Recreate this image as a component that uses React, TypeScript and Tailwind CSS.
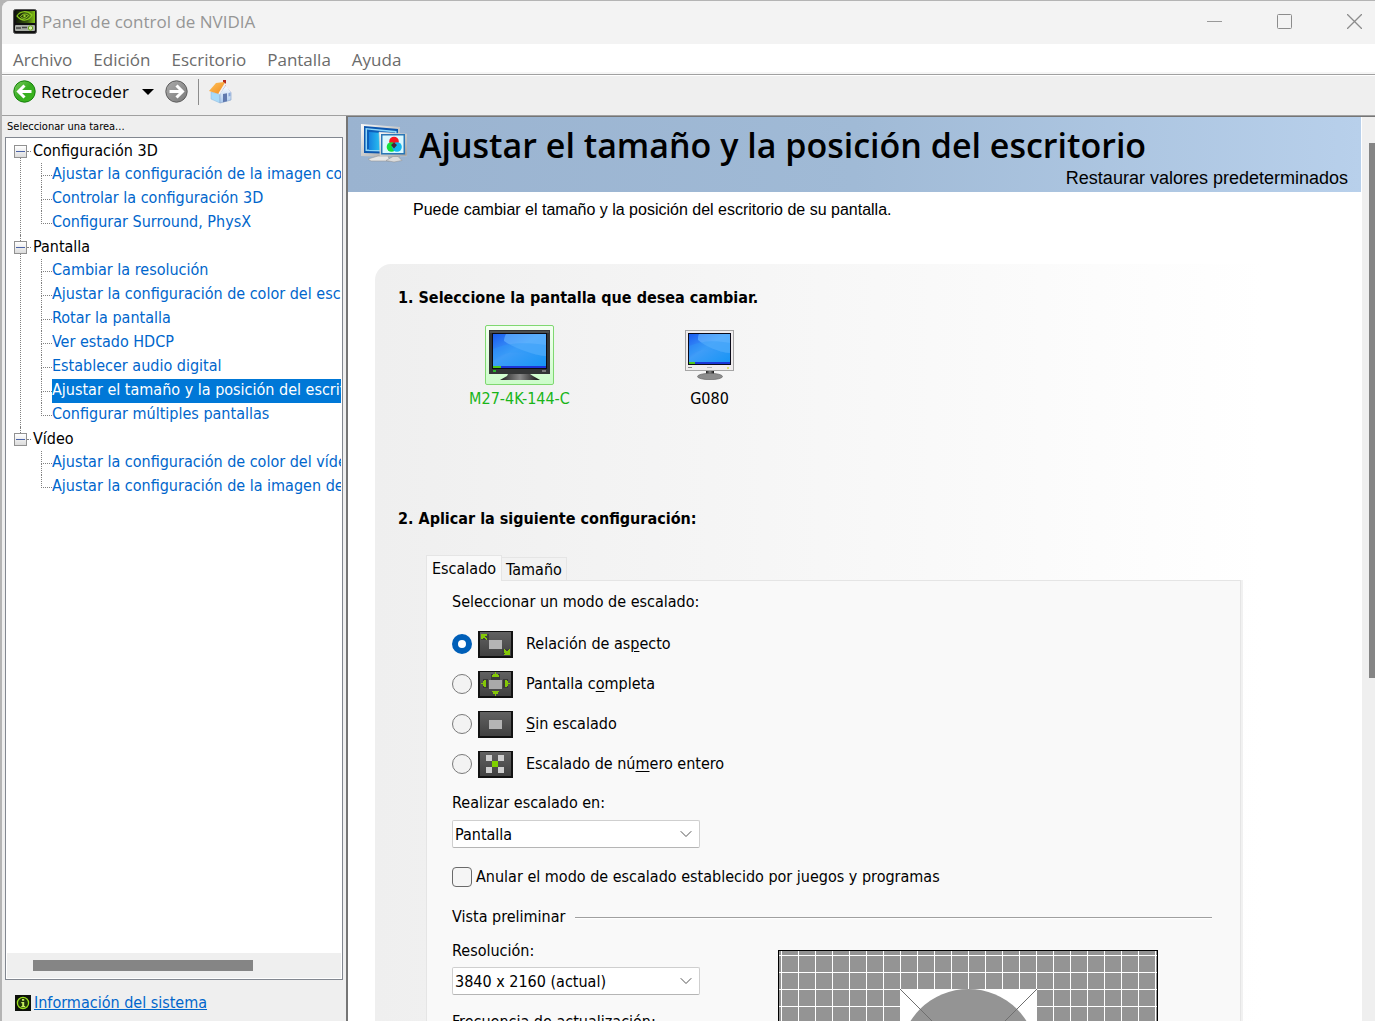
import { useState } from 'react';
import type { ReactNode } from 'react';
import { ChevronDown } from 'lucide-react';

interface TaskGroup {
  title: string;
  tasks: string[];
}

const MENUS = ['Archivo', 'Edición', 'Escritorio', 'Pantalla', 'Ayuda'];

const GROUPS: TaskGroup[] = [
  {
    title: 'Configuración 3D',
    tasks: [
      'Ajustar la configuración de la imagen con vista previa',
      'Controlar la configuración 3D',
      'Configurar Surround, PhysX',
    ],
  },
  {
    title: 'Pantalla',
    tasks: [
      'Cambiar la resolución',
      'Ajustar la configuración de color del escritorio',
      'Rotar la pantalla',
      'Ver estado HDCP',
      'Establecer audio digital',
      'Ajustar el tamaño y la posición del escritorio',
      'Configurar múltiples pantallas',
    ],
  },
  {
    title: 'Vídeo',
    tasks: [
      'Ajustar la configuración de color del vídeo',
      'Ajustar la configuración de la imagen de vídeo',
    ],
  },
];

/* ---------- icons ---------- */

function AppIcon() {
  return (
    <svg width="24" height="25" viewBox="0 0 24 25" className="shrink-0">
      <defs>
        <linearGradient id="appGreen" x1="0" y1="0" x2="1" y2="0">
          <stop offset="0" stopColor="#12190a" />
          <stop offset="0.6" stopColor="#3c5c10" />
          <stop offset="1" stopColor="#84c414" />
        </linearGradient>
      </defs>
      <rect x="0.5" y="0.5" width="23" height="24" rx="2" fill="#111" stroke="#555" />
      <rect x="3" y="2" width="19" height="12" fill="url(#appGreen)" />
      <path d="M4 7c3-5 10-6 15-1-3 6-10 7-15 1z" fill="none" stroke="#8ccc1e" strokeWidth="1.2" />
      <path d="M7.500 7.500c2-3 6-3 8-1-2 3-5 4-8 1z" fill="none" stroke="#9bd62a" strokeWidth="1" />
      <circle cx="11.500" cy="7" r="1.200" fill="#9bd62a" />
      <rect x="2" y="16" width="20" height="6" rx="1" fill="#a9ada6" />
      <path d="M3 19h5M9 18.500h5" stroke="#444" strokeWidth="1.500" />
      <circle cx="17.500" cy="19" r="2.200" fill="#d8f2b0" stroke="#6aa516" />
    </svg>
  );
}

function ArrowIcon({ forward = false }: { forward?: boolean }) {
  return (
    <svg width="23" height="23" viewBox="0 0 23 23" className="shrink-0">
      <defs>
        <linearGradient id="backFill" x1="0" y1="0" x2="1" y2="1">
          <stop offset="0" stopColor="#7ccc60" />
          <stop offset="0.5" stopColor="#36ac20" />
          <stop offset="1" stopColor="#3cb81c" />
        </linearGradient>
        <linearGradient id="fwdFill" x1="0" y1="0" x2="1" y2="1">
          <stop offset="0" stopColor="#ababab" />
          <stop offset="1" stopColor="#7a7a7a" />
        </linearGradient>
      </defs>
      <circle
        cx="11.5"
        cy="11.5"
        r="10.7"
        fill={forward ? 'url(#fwdFill)' : 'url(#backFill)'}
        stroke={forward ? '#5e5e5e' : '#16800c'}
      />
      <path
        d={forward ? 'M4.500 11.500H17M11.500 5.500l6 6-6 6' : 'M18.500 11.500H6M11.500 5.500l-6 6 6 6'}
        fill="none"
        stroke="#fff"
        strokeWidth="3"
      />
    </svg>
  );
}

function HomeIcon() {
  return (
    <svg width="24" height="24" viewBox="0 0 24 24">
      <defs>
        <linearGradient id="roof" x1="0" y1="0" x2="1" y2="1">
          <stop offset="0" stopColor="#ffc35c" />
          <stop offset="1" stopColor="#f08a1c" />
        </linearGradient>
        <linearGradient id="wall" x1="0" y1="0" x2="0" y2="1">
          <stop offset="0" stopColor="#ffffff" />
          <stop offset="1" stopColor="#a9c9ee" />
        </linearGradient>
      </defs>
      <path d="M2 12l9 2v9l-9-4z" fill="#a9dbf8" stroke="#8bb4df" strokeWidth="0.5" />
      <path d="M11 13l6-8 5 7v8l-11 3z" fill="url(#wall)" stroke="#8fa9cf" strokeWidth="0.7" />
      <rect x="14" y="0" width="3" height="6" fill="#b4281c" />
      <path d="M0 11l7-8 8-1 1 2-6 10z" fill="url(#roof)" />
      <path d="M10 14l6-10 7 8" fill="none" stroke="#f3eef0" strokeWidth="1.600" />
      <path d="M14 14l4-.7v8l-4 1z" fill="#5f78ad" />
      <path d="M19.500 13l2-.4v3.500l-2 .4z" fill="#8aa6d8" />
    </svg>
  );
}

function InfoIcon() {
  return (
    <svg width="16" height="16" viewBox="0 0 16 16" className="shrink-0">
      <rect width="16" height="16" fill="#0c100a" />
      <circle cx="8" cy="8" r="5.600" fill="#1f330a" stroke="#9adf1c" strokeWidth="1.300" />
      <path d="M7 4h2.200v1.800H7zM6.300 7h2.900v4h1v1.300H6.300V11h.9V8.200h-.9z" fill="#c8f060" />
    </svg>
  );
}

function HeaderIcon() {
  return (
    <svg width="46" height="40" viewBox="0 0 46 40" className="shrink-0">
      <defs>
        <linearGradient id="screenBlue" x1="0" y1="0" x2="1" y2="0">
          <stop offset="0" stopColor="#1683e0" />
          <stop offset="0.6" stopColor="#2fd4f6" />
          <stop offset="1" stopColor="#7feefb" />
        </linearGradient>
        <linearGradient id="silver" x1="0" y1="0" x2="1" y2="1">
          <stop offset="0" stopColor="#fafafa" />
          <stop offset="1" stopColor="#9b9b9b" />
        </linearGradient>
      </defs>
      <path d="M0 0l39 3v30l-16 0-23-1z" fill="url(#silver)" />
      <path d="M3 2l34 3v25l-34-1z" fill="#0c56ae" />
      <path d="M4.500 4l31 3v21l-31-1z" fill="#8fd6f8" />
      <path d="M6 5.500l28 3v18l-28-1z" fill="#0d5fb8" />
      <path d="M8 8l25 2v16H8z" fill="url(#screenBlue)" />
      <path d="M7 35l10-3h10l2 5H10z" fill="#e6e6e6" stroke="#999" strokeWidth="0.600" />
      <path d="M18 8l28 2v22H19z" fill="url(#silver)" stroke="#ccc" strokeWidth="0.500" />
      <path d="M20 10h24v20.500H20z" fill="#2a76b6" />
      <path d="M21.500 11.500h21V29h-21z" fill="#d9f8ff" />
      <circle cx="33" cy="17.500" r="4.800" fill="#fa1420" />
      <circle cx="30.500" cy="23" r="4.800" fill="#12e03a" />
      <circle cx="36" cy="23" r="4.800" fill="#12b6ee" />
      <path d="M33 18.500l3 2.500-3 3.500-3-3.500z" fill="#4a2338" />
      <path d="M25 36.500l7-4h5l4 4-8 1.500z" fill="#dcdcdc" stroke="#8e8e8e" strokeWidth="0.500" />
    </svg>
  );
}

function ScreenDefs() {
  return (
    <defs>
      <linearGradient id="lcd" x1="0" y1="0" x2="1" y2="1">
        <stop offset="0" stopColor="#1a5cf0" />
        <stop offset="0.450" stopColor="#3f9df8" />
        <stop offset="1" stopColor="#1795f5" />
      </linearGradient>
      <linearGradient id="standDark" x1="0" y1="0" x2="1" y2="0">
        <stop offset="0" stopColor="#222" />
        <stop offset="0.500" stopColor="#888" />
        <stop offset="1" stopColor="#111" />
      </linearGradient>
    </defs>
  );
}

function BlackMonitor() {
  return (
    <svg width="61" height="50" viewBox="0 0 61 50">
      <ScreenDefs />
      <rect width="61" height="44" fill="#333536" />
      <rect x="1" y="1" width="59" height="2" fill="#4c4f50" />
      <rect x="3" y="3" width="55" height="36" fill="#0c0c14" />
      <rect x="4" y="4" width="53" height="32" fill="url(#lcd)" />
      <path d="M17 4h40v22C42 25 22 16 15 11c0-3 1-5 2-7z" fill="#6dbbff" opacity="0.6" />
      <path d="M4 19c14-6 30-7 53-4v11C40 25 22 16 4 30z" fill="#2f9bf8" opacity="0.400" />
      <rect x="4" y="36" width="53" height="2" fill="#1b36d8" />
      <rect x="4" y="36" width="8" height="2" fill="#4fc61c" />
      <rect x="4" y="40" width="3" height="2" fill="#28b52c" />
      <rect x="53" y="40" width="4" height="2" fill="#777" />
      <path d="M19 44h22l3 2 7 4H11l7-4z" fill="url(#standDark)" />
    </svg>
  );
}

function WhiteMonitor() {
  return (
    <svg width="49" height="50" viewBox="0 0 49 50">
      <rect x="0.5" y="0.5" width="48" height="40" fill="#f0edee" stroke="#a5a5a5" />
      <rect x="3" y="3" width="43" height="32" fill="#0a0a18" />
      <rect x="4" y="4" width="41" height="28" fill="url(#lcd)" />
      <path d="M14 4h31v19C33 22 20 16 13 10c0-3 0-4 1-6z" fill="#6dbbff" opacity="0.600" />
      <path d="M4 16c12-5 24-6 41-3v10C33 22 18 14 4 26z" fill="#2f9bf8" opacity="0.400" />
      <rect x="4" y="32" width="41" height="2" fill="#1b36d8" />
      <rect x="4" y="32" width="6" height="2" fill="#4fc61c" />
      <rect x="3" y="37" width="4" height="1" fill="#888" />
      <rect x="22" y="37" width="5" height="1" fill="#bbb" />
      <circle cx="43" cy="38" r="1" fill="#d5d84c" />
      <path d="M21 41h8v5h-8z" fill="url(#standDark)" />
      <ellipse cx="25" cy="46.500" rx="12.500" ry="3.200" fill="#8d8d8d" stroke="#5f5f5f" strokeWidth="0.600" />
    </svg>
  );
}

function ModeFrame({ children }: { children: ReactNode }) {
  return (
    <svg width="35" height="27" viewBox="0 0 35 27" className="shrink-0" shapeRendering="crispEdges">
      <defs>
        <linearGradient id="modeBg" x1="0" y1="0" x2="0" y2="1">
          <stop offset="0" stopColor="#616161" />
          <stop offset="1" stopColor="#414141" />
        </linearGradient>
      </defs>
      <rect width="35" height="27" fill="#121212" />
      <rect x="2" y="1" width="31" height="24" fill="url(#modeBg)" />
      {children}
    </svg>
  );
}

const MODES: { id: string; label: ReactNode; icon: ReactNode }[] = [
  {
    id: 'aspect',
    label: <>Relación de as<u>p</u>ecto</>,
    icon: (
      <ModeFrame>
        <path d="M3 3h8v6H3zM24 18h8v6h-8z" fill="#3f3f3f" />
        <rect x="11" y="9" width="13" height="9" fill="#b4b4b4" />
        <path d="M3 3h6v2H7v1h1v1h1v2H8V8H7V7H5v1H3z" fill="#84c808" />
        <path d="M26 18h1v1h1v1h2v-1h1v-1h1v6h-6v-1h1v-1h-1z" fill="#84c808" />
      </ModeFrame>
    ),
  },
  {
    id: 'full',
    label: <>Pantalla c<u>o</u>mpleta</>,
    icon: (
      <ModeFrame>
        <path d="M13 3h9v6h-9zM5 8h5v9H5zM25 8h5v9h-5z" fill="#3a3a3a" />
        <rect x="11" y="9" width="13" height="9" fill="#a9a9a9" />
        <path d="M17 1h1v2h2v1h1v2h-7V4h1V3h2z" fill="#84c808" />
        <path d="M14 20h7v1h-1v2h-2v2h-1v-2h-2v-2h-1z" fill="#84c808" />
        <path d="M3 12h2v-2h1V9h2v7H6v-1H5v-2H3z" fill="#84c808" />
        <path d="M27 9h2v1h1v2h2v1h-2v2h-1v1h-2z" fill="#84c808" />
      </ModeFrame>
    ),
  },
  {
    id: 'none',
    label: <><u>S</u>in escalado</>,
    icon: (
      <ModeFrame>
        <rect x="11" y="9" width="13" height="9" fill="#b4b4b4" />
      </ModeFrame>
    ),
  },
  {
    id: 'integer',
    label: <>Escalado de nú<u>m</u>ero entero</>,
    icon: (
      <ModeFrame>
        <path d="M8 4h6v6H8zM20 4h6v6h-6zM8 16h6v6H8zM20 16h6v6h-6z" fill="#cfcfcf" />
        <rect x="14" y="10" width="6" height="6" fill="#7fd000" />
      </ModeFrame>
    ),
  },
];

/* ---------- window parts ---------- */

function TitleBar() {
  return (
    <header className="flex h-[43px] shrink-0 items-center bg-[#f3f3f3] pb-[2px] pl-[11px] pr-[13px]">
      <AppIcon />
      <h1 className="ml-[5px] flex-1 font-['Open_Sans','Noto_Sans',sans-serif] text-[17px] text-[#969696]">
        Panel de control de NVIDIA
      </h1>
      <div className="flex items-center gap-[55px]">
        <button aria-label="Minimizar">
          <svg width="15" height="15" viewBox="0 0 15 15"><path d="M0 7.500h15" stroke="#999" /></svg>
        </button>
        <button aria-label="Maximizar">
          <svg width="15" height="15" viewBox="0 0 15 15">
            <rect x="0.5" y="0.5" width="14" height="14" rx="1" fill="none" stroke="#8c8c8c" />
          </svg>
        </button>
        <button aria-label="Cerrar">
          <svg width="15" height="15" viewBox="0 0 15 15"><path d="M0 0l15 15M15 0L0 15" stroke="#8c8c8c" strokeWidth="1.300" /></svg>
        </button>
      </div>
    </header>
  );
}

function MenuBar() {
  return (
    <nav className="flex h-[30px] shrink-0 items-center gap-[21px] border-b-2 border-[#f6f6f6] bg-white pl-[11px] pt-[3px] font-['Open_Sans','Noto_Sans',sans-serif] text-[17px] text-[#6b6b6b]">
      {MENUS.map((m) => (
        <button key={m}>{m}</button>
      ))}
    </nav>
  );
}

function ToolBar() {
  return (
    <div className="flex h-[42px] shrink-0 items-center border-y border-[#a0a0a0] bg-[#efefef] pb-[7px] pl-[11px] shadow-[inset_0_1px_0_#fff]">
      <button className="flex items-center gap-[5px] font-['Open_Sans','Noto_Sans',sans-serif] text-[17px]">
        <ArrowIcon />
        Retroceder
      </button>
      <button aria-label="Historial" className="ml-[13px]">
        <svg width="12" height="6" viewBox="0 0 12 6"><path d="M0 0h12L6 6z" /></svg>
      </button>
      <button aria-label="Avanzar" className="ml-[11px]">
        <ArrowIcon forward />
      </button>
      <div className="ml-[10px] h-[26px] w-px bg-[#8c8c8c]" />
      <button aria-label="Inicio" className="ml-[10px]">
        <HomeIcon />
      </button>
    </div>
  );
}

function TaskTree({ selected, onSelect }: { selected: string; onSelect: (task: string) => void }) {
  return (
    <ul className="flex-1 overflow-hidden bg-white">
      {GROUPS.map((group, gi) => (
        <li key={group.title} className="flex">
          <div className="flex w-[13px] shrink-0 flex-col items-center">
            <div className={gi > 0 ? 'h-[6px] border-l border-dotted border-[#808080]' : 'h-[6px]'} />
            <button
              aria-label={group.title}
              className="flex h-[13px] w-[13px] shrink-0 items-center justify-center border border-[#919191] bg-linear-to-b from-white to-[#dcdcdc]"
            >
              <span className="h-px w-[9px] bg-[#4b63a7]" />
            </button>
            {gi < GROUPS.length - 1 && <div className="w-px flex-1 border-l border-dotted border-[#808080]" />}
          </div>
          <div className="min-w-0 flex-1">
            <div className="flex h-6 items-center gap-[2px]">
              <span className="w-1 border-t border-dotted border-[#808080]" />
              <span>{group.title}</span>
            </div>
            <ul className="ml-[14px]">
              {group.tasks.map((task, ti) => (
                <li key={task} className="flex h-6">
                  <div className="flex w-[11px] shrink-0 flex-col">
                    <div className="h-[13px] border-b border-l border-dotted border-[#808080]" />
                    {ti < group.tasks.length - 1 && <div className="flex-1 border-l border-dotted border-[#808080]" />}
                  </div>
                  <a
                    href="#"
                    onClick={() => onSelect(task)}
                    className={
                      task === selected
                        ? 'flex-1 overflow-hidden whitespace-nowrap bg-[#0078d7] leading-[22px] text-white'
                        : 'flex-1 overflow-hidden whitespace-nowrap leading-[22px] text-[#0066cc]'
                    }
                  >
                    {task}
                  </a>
                </li>
              ))}
            </ul>
          </div>
        </li>
      ))}
    </ul>
  );
}

function Sidebar() {
  const [selected, setSelected] = useState('Ajustar el tamaño y la posición del escritorio');

  return (
    <aside className="flex w-[344px] shrink-0 flex-col bg-[#efefef] pl-[3px] pr-[3px]">
      <p className="pl-[2px] text-[11px] leading-[21px]">Seleccionar una tarea...</p>
      <div className="flex min-h-0 flex-1 flex-col border border-[#828790] bg-white p-px">
        <div className="flex min-h-0 flex-1 pl-[7px]">
          <TaskTree selected={selected} onSelect={setSelected} />
        </div>
        <div className="flex h-[25px] items-center bg-[#efefef] pl-[26px]">
          <div className="h-[11px] w-[220px] bg-[#858585]" />
        </div>
      </div>
      <div className="flex h-[41px] items-center gap-[3px] pb-px pl-[10px] pt-[6px]">
        <InfoIcon />
        <a href="#" className="text-[#0066cc] underline">Información del sistema</a>
      </div>
    </aside>
  );
}

function Dropdown({ id, options }: { id: string; options: string[] }) {
  return (
    <div className="relative w-[248px]">
      <select
        id={id}
        className="h-7 w-full appearance-none rounded-xs border border-[#cfcfcf] border-b-[#b5b5b5] bg-white pl-[2px] pt-px"
      >
        {options.map((o) => (
          <option key={o}>{o}</option>
        ))}
      </select>
      <ChevronDown size={20} strokeWidth={1.2} className="pointer-events-none absolute right-1 top-1 text-[#555]" />
    </div>
  );
}

// Test pattern: 17px grid with the aspect ratio circle in the middle
function Preview() {
  return (
    <svg width="380" height="216" viewBox="0 0 380 216" className="mt-[11px] shrink-0">
      <defs>
        <pattern id="grid" x="3" y="5" width="17" height="17" patternUnits="userSpaceOnUse">
          <rect width="17" height="17" fill="#949494" />
          <path d="M0 0h17v1H1v16H0z" fill="#fff" />
        </pattern>
      </defs>
      <rect width="380" height="216" fill="url(#grid)" />
      <rect x="122" y="39" width="137" height="137" fill="#fff" />
      <circle cx="190.5" cy="107.5" r="68.5" fill="#949494" />
      <path d="M122 39l137 137M259 39L122 176" stroke="#6f6f6f" />
      <rect x="0.5" y="0.5" width="379" height="215" fill="none" stroke="#000" />
    </svg>
  );
}

function ScalingTab() {
  const [mode, setMode] = useState('aspect');

  return (
    <section className="mr-[121px] border border-[#e5e5e5] bg-[#f9f9f9] pb-6 pl-[25px] pr-7 pt-[9px] shadow-[2px_0_0_#f1f1f1]">
      <fieldset>
        <legend className="leading-6">Seleccionar un modo de escalado:</legend>
        <div className="mt-[10px]">
          {MODES.map((m) => (
            <label key={m.id} className="flex h-10 items-center">
              <input
                type="radio"
                name="mode"
                checked={mode === m.id}
                onChange={() => setMode(m.id)}
                className="h-5 w-5 shrink-0 appearance-none rounded-full border border-[#7a7a7a] bg-[#f3f3f3] checked:border-[6px] checked:border-[#005fb8] checked:bg-white"
              />
              <span className="ml-[6px] mr-[13px]">{m.icon}</span>
              <span className="decoration-1 underline-offset-2">{m.label}</span>
            </label>
          ))}
        </div>
      </fieldset>

      <label htmlFor="scaleOn" className="mb-[5px] mt-[7px] block leading-6">Realizar escalado en:</label>
      <Dropdown id="scaleOn" options={['Pantalla', 'GPU']} />

      <label className="mt-[17px] flex h-6 items-center gap-1">
        <input type="checkbox" className="h-5 w-5 shrink-0 appearance-none rounded-sm border border-[#6a6a6a] bg-[#f5f5f5]" />
        Anular el modo de escalado establecido por juegos y programas
      </label>

      <div className="mt-4 flex items-center gap-[10px]">
        <h3 className="leading-6">Vista preliminar</h3>
        <div className="h-px flex-1 bg-[#a0a0a0] shadow-[0_1px_0_#fff]" />
      </div>

      <div className="mt-[10px] flex">
        <div className="w-[326px] shrink-0">
          <label htmlFor="resolution" className="mb-1 block leading-6">Resolución:</label>
          <Dropdown id="resolution" options={['3840 x 2160 (actual)']} />
          <label htmlFor="refresh" className="mb-1 mt-[15px] block leading-6">Frecuencia de actualización:</label>
          <Dropdown id="refresh" options={['144 Hz']} />
        </div>
        <Preview />
      </div>
    </section>
  );
}

function DisplayPicker() {
  return (
    <div className="ml-[27px] mt-[15px] flex">
      <button className="flex w-[189px] flex-col items-center text-[#19b519]">
        <span className="flex h-[60px] w-[69px] justify-center rounded-xs border border-[#7fd870] bg-linear-to-b from-[#f4fff2] to-[#ccfcca] pt-1">
          <BlackMonitor />
        </span>
        <span className="leading-7">M27-4K-144-C</span>
      </button>
      <button className="flex w-[191px] flex-col items-center">
        <span className="flex h-[60px] pt-[5px]">
          <WhiteMonitor />
        </span>
        <span className="leading-7">G080</span>
      </button>
    </div>
  );
}

export default function App() {
  return (
    <div className="h-screen overflow-hidden bg-[#b4b4b4] pl-[2px] pt-px">
      <div className="flex h-full flex-col overflow-hidden rounded-tl-lg bg-[#efefef] font-['DejaVu_Sans_Condensed','Noto_Sans',sans-serif] text-base text-black">
        <TitleBar />
        <MenuBar />
        <ToolBar />
        <div className="flex min-h-0 flex-1">
          <Sidebar />
          <main className="flex min-w-0 flex-1 border-l-2 border-t border-[#757575] bg-white">
            <div className="min-w-0 flex-1 overflow-hidden">
              <div className="mr-px h-[75px] bg-linear-to-r from-[#9ab3d0] via-[#a0bad6] to-[#b8d0eb]">
                <div className="flex items-start gap-3 pl-[13px] pt-[7px]">
                  <HeaderIcon />
                  <h2 className="whitespace-nowrap font-['Open_Sans','Noto_Sans',sans-serif] text-[34px] font-semibold leading-[42px]">
                    Ajustar el tamaño y la posición del escritorio
                  </h2>
                </div>
                <div className="flex justify-end pr-[13px]">
                  <button className="font-['Liberation_Sans',sans-serif] text-lg leading-6">
                    Restaurar valores predeterminados
                  </button>
                </div>
              </div>
              <p className="pl-[65px] pt-[6px] font-['Liberation_Sans',sans-serif] text-base leading-6">
                Puede cambiar el tamaño y la posición del escritorio de su pantalla.
              </p>
              <div className="ml-[27px] mt-[42px] rounded-tl-2xl bg-linear-to-r from-[#efefef] to-white to-90% pl-[23px] pt-[22px]">
                <h3 className="font-bold leading-6">1. Seleccione la pantalla que desea cambiar.</h3>
                <DisplayPicker />
                <h3 className="mt-[94px] font-bold leading-6">2. Aplicar la siguiente configuración:</h3>
                <div className="ml-[28px] mt-6">
                  <div className="-mb-px flex items-end">
                    <button className="relative h-[26px] border border-b-0 border-[#e5e5e5] bg-[#f9f9f9] px-[5px]">
                      Escalado
                    </button>
                    <button className="h-6 border border-l-0 border-[#e5e5e5] bg-[#f2f2f2] px-1">Tamaño</button>
                  </div>
                  <ScalingTab />
                </div>
              </div>
            </div>
            <div className="flex w-[13px] shrink-0 justify-end bg-[#efefef] pt-[26px]">
              <div className="h-[535px] w-[6px] bg-[#858585]" />
            </div>
          </main>
        </div>
      </div>
    </div>
  );
}
